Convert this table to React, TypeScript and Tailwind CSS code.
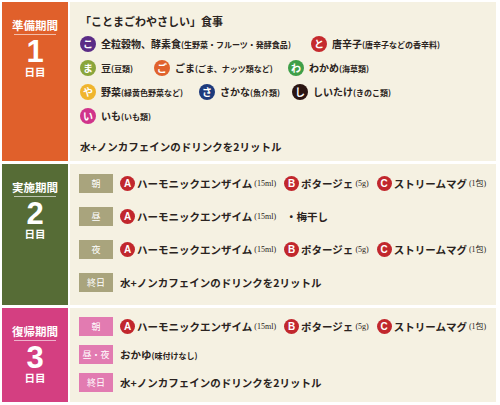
import React from 'react';

const jp = { fontFamily: '"Noto Sans CJK JP", sans-serif' };

const Dot = ({ ch, color }: { ch: string; color: string }) => (
  <span
    className={`inline-flex items-center justify-center w-[16px] h-[16px] rounded-full text-white text-[10px] font-bold leading-none shrink-0 ${color}`}
  >
    {ch}
  </span>
);

const Abc = ({ ch }: { ch: string }) => (
  <span
    className="inline-flex items-center justify-center w-[15px] h-[15px] rounded-full bg-[#c1272d] text-white text-[10px] font-bold leading-none shrink-0"
    style={{ fontFamily: '"Liberation Sans", sans-serif' }}
  >
    {ch}
  </span>
);

const Food = ({ ch, color, main, sub }: { ch: string; color: string; main: string; sub: string }) => (
  <div className="flex items-center gap-[5px]">
    <Dot ch={ch} color={color} />
    <span className="text-[10px] font-bold text-[#2a2320] whitespace-nowrap">
      {main}
      <span className="text-[8px]">({sub})</span>
    </span>
  </div>
);

const DayBadge = ({ period, num, color }: { period: string; num: string; color: string }) => (
  <div className={`w-[66px] shrink-0 flex flex-col items-center pt-[16px] text-white ${color}`}>
    <div className="text-[11.5px] font-bold leading-[14px]">{period}</div>
    <div className="w-[42px] h-px bg-white/60 mt-[2px]" />
    <div
      className="text-[31px] font-bold leading-[26px] mt-[4px]"
      style={{ fontFamily: '"Liberation Sans", sans-serif' }}
    >
      {num}
    </div>
    <div className="text-[10.5px] font-bold leading-[14px]">日目</div>
  </div>
);

const Tag = ({ label, color }: { label: string; color: string }) => (
  <span
    className={`inline-flex items-center justify-center w-[34px] h-[19px] text-white text-[9px] shrink-0 ${color}`}
  >
    {label}
  </span>
);

const Item = ({ letter, name, note }: { letter: string; name: string; note: string }) => (
  <span className="flex items-center gap-[2px] whitespace-nowrap">
    <Abc ch={letter} />
    <span className="text-[10.5px] font-bold">{name}</span>
    <span className="text-[8px]" style={{ fontFamily: '"Liberation Serif", "Noto Sans CJK JP", serif' }}>
      {note}
    </span>
  </span>
);

const FullSet = () => (
  <div className="flex items-center gap-[8px]">
    <Item letter="A" name="ハーモニックエンザイム" note="(15ml)" />
    <Item letter="B" name="ポタージェ" note="(5g)" />
    <Item letter="C" name="ストリームマグ" note="(1包)" />
  </div>
);

const Drink = () => (
  <span className="text-[10.5px] font-bold whitespace-nowrap">水+ノンカフェインのドリンクを2リットル</span>
);

export default function App() {
  return (
    <div className="w-[500px] h-[405px] bg-white pl-[2px] pr-[4px] pt-[2px] flex flex-col gap-[3px] text-[#2a2320]" style={jp}>
      {/* 1日目 */}
      <div className="flex h-[159px] gap-[2px]">
        <DayBadge period="準備期間" num="1" color="bg-[#e0602b]" />
        <div className="flex-1 bg-[#f5f1e2] pl-[10px] pt-[11px]">
          <div className="text-[11px] font-bold leading-[16px]">「ことまごわやさしい」食事</div>
          <div className="flex flex-col gap-[7px] mt-[6px]">
            <div className="flex items-center h-[17px]">
              <div className="w-[231px]">
                <Food ch="こ" color="bg-[#5b2c86]" main="全粒穀物、酵素食" sub="生野菜・フルーツ・発酵食品" />
              </div>
              <Food ch="と" color="bg-[#c52a2d]" main="唐辛子" sub="唐辛子などの香辛料" />
            </div>
            <div className="flex items-center h-[17px]">
              <div className="w-[74px]">
                <Food ch="ま" color="bg-[#8aa53b]" main="豆" sub="豆類" />
              </div>
              <div className="w-[134px]">
                <Food ch="ご" color="bg-[#e0622c]" main="ごま" sub="ごま、ナッツ類など" />
              </div>
              <Food ch="わ" color="bg-[#3f9f48]" main="わかめ" sub="海草類" />
            </div>
            <div className="flex items-center h-[17px]">
              <div className="w-[119px]">
                <Food ch="や" color="bg-[#f0b52d]" main="野菜" sub="緑黄色野菜など" />
              </div>
              <div className="w-[93px]">
                <Food ch="さ" color="bg-[#1d3a7c]" main="さかな" sub="魚介類" />
              </div>
              <Food ch="し" color="bg-[#2b1512]" main="しいたけ" sub="きのこ類" />
            </div>
            <div className="flex items-center h-[17px]">
              <Food ch="い" color="bg-[#d0348b]" main="いも" sub="いも類" />
            </div>
          </div>
          <div className="mt-[12px] leading-[16px]">
            <Drink />
          </div>
        </div>
      </div>

      {/* 2日目 */}
      <div className="flex h-[141px] gap-[2px]">
        <DayBadge period="実施期間" num="2" color="bg-[#566c36]" />
        <div className="flex-1 bg-[#f5f1e2] pl-[9px] pt-[10px] flex flex-col gap-[14px]">
          <div className="flex items-center gap-[7px] h-[19px]">
            <Tag label="朝" color="bg-[#a9a47d]" />
            <FullSet />
          </div>
          <div className="flex items-center gap-[7px] h-[19px]">
            <Tag label="昼" color="bg-[#a9a47d]" />
            <Item letter="A" name="ハーモニックエンザイム" note="(15ml)" />
            <span className="text-[10.5px] font-bold ml-[3px]">・梅干し</span>
          </div>
          <div className="flex items-center gap-[7px] h-[19px]">
            <Tag label="夜" color="bg-[#a9a47d]" />
            <FullSet />
          </div>
          <div className="flex items-center gap-[7px] h-[19px]">
            <Tag label="終日" color="bg-[#a9a47d]" />
            <Drink />
          </div>
        </div>
      </div>

      {/* 3日目 */}
      <div className="flex h-[94px] gap-[2px]">
        <DayBadge period="復帰期間" num="3" color="bg-[#d43f81]" />
        <div className="flex-1 bg-[#f5f1e2] pl-[9px] pt-[9px] flex flex-col gap-[9px]">
          <div className="flex items-center gap-[7px] h-[19px]">
            <Tag label="朝" color="bg-[#e27bb1]" />
            <FullSet />
          </div>
          <div className="flex items-center gap-[7px] h-[19px]">
            <Tag label="昼・夜" color="bg-[#e27bb1]" />
            <span className="text-[10.5px] font-bold whitespace-nowrap">
              おかゆ<span className="text-[8px]">(味付けなし)</span>
            </span>
          </div>
          <div className="flex items-center gap-[7px] h-[19px]">
            <Tag label="終日" color="bg-[#e27bb1]" />
            <Drink />
          </div>
        </div>
      </div>
    </div>
  );
}
